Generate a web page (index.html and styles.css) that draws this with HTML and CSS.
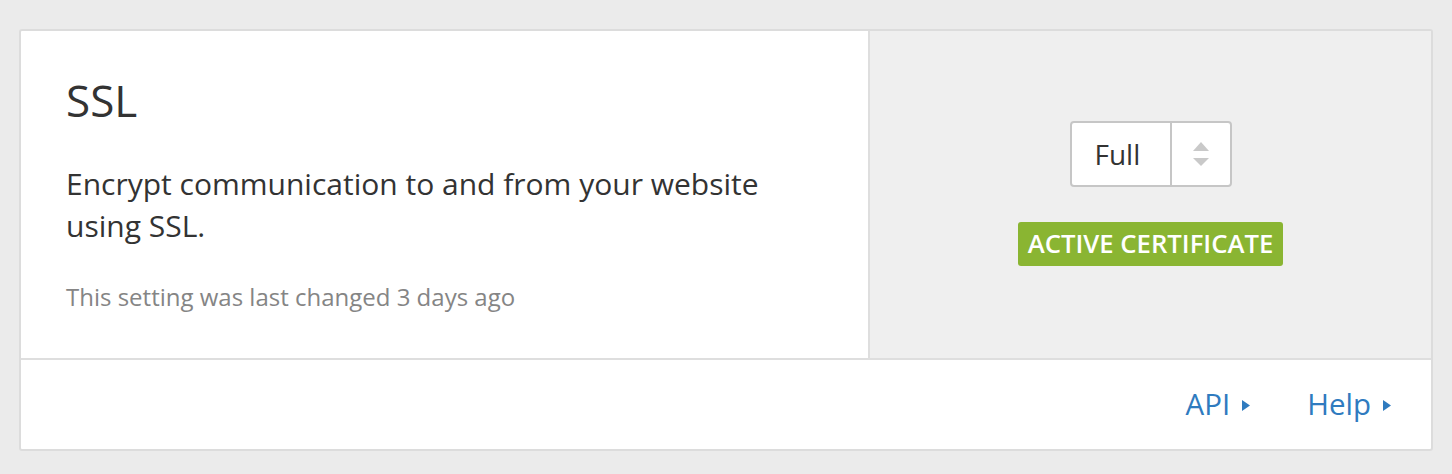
FILE: index.html
```html
<!DOCTYPE html>
<html>
<head>
<meta charset="utf-8">
<link rel="stylesheet" href="styles.css">
</head>
<body>
<div class="card">
  <div class="card-main">
    <div class="card-info">
      <h1 class="card-title">SSL</h1>
      <p class="card-desc">Encrypt communication to and from your website using SSL.</p>
      <p class="card-meta">This setting was last changed 3 days ago</p>
    </div>
    <div class="card-control">
      <div class="select">
        <span class="select-value">Full</span>
        <span class="select-arrows">
          <svg width="16" height="25" viewBox="0 0 16 25"><polygon points="8,0 16,9 0,9" fill="#c9c9c9"/><polygon points="0,16 16,16 8,24" fill="#c9c9c9"/></svg>
        </span>
      </div>
      <span class="badge">Active Certificate</span>
    </div>
  </div>
  <div class="card-footer">
    <a class="link" href="#">API<svg class="caret" width="8" height="11" viewBox="0 0 8 11"><polygon points="0,0 8,5.5 0,11" fill="#2f7bbf"/></svg></a>
    <a class="link" href="#">Help<svg class="caret" width="8" height="11" viewBox="0 0 8 11"><polygon points="0,0 8,5.5 0,11" fill="#2f7bbf"/></svg></a>
  </div>
</div>
</body>
</html>
```
FILE: styles.css
```css
html, body {
  margin: 0;
  padding: 0;
}
body {
  background: #ebebeb;
  padding: 29px 19px 23px 19px;
  font-family: "Open Sans", "Liberation Sans", sans-serif;
  color: #333;
}
.card {
  background: #fff;
  border: 2px solid #dcdcdc;
  border-radius: 3px;
  box-sizing: border-box;
  width: 1414px;
}
.card-main {
  display: flex;
  border-bottom: 2px solid #dedede;
  height: 327px;
}
.card-info {
  width: 849px;
  box-sizing: border-box;
  padding: 43px 45px 0 45px;
  border-right: 2px solid #dedede;
}
.card-title {
  margin: 0;
  font-size: 44px;
  font-weight: 400;
  line-height: 53px;
}
.card-desc {
  margin: 36px 0 0 0;
  font-size: 30px;
  line-height: 42px;
}
.card-meta {
  margin: 32px 0 0 0;
  font-size: 24px;
  line-height: 36px;
  color: #858585;
}
.card-control {
  flex: 1;
  background: #efefef;
  display: flex;
  flex-direction: column;
  align-items: center;
  justify-content: center;
  gap: 35px;
  padding-bottom: 2px;
}
.select {
  display: flex;
  height: 66px;
  box-sizing: border-box;
  border: 2px solid #c6c6c6;
  border-radius: 4px;
  background: #fff;
}
.select-value {
  width: 100px;
  box-sizing: border-box;
  padding-left: 23px;
  border-right: 2px solid #c6c6c6;
  font-size: 28px;
  line-height: 62px;
  color: #333;
}
.select-arrows {
  width: 58px;
  display: flex;
  align-items: center;
  justify-content: center;
}
.badge {
  display: inline-block;
  background: #8ab532;
  color: #fff;
  border-radius: 3px;
  padding: 0 10px;
  height: 44px;
  line-height: 44px;
  font-size: 25.7px;
  font-weight: 600;
  text-transform: uppercase;
}
.card-footer {
  display: flex;
  justify-content: flex-end;
  gap: 57px;
  padding: 23px 40px 24px 0;
}
.link {
  color: #2f7bbf;
  text-decoration: none;
  font-size: 29.5px;
  line-height: 42px;
  display: flex;
  align-items: center;
}
.caret {
  margin-left: 12px;
  margin-top: 2px;
}
```
